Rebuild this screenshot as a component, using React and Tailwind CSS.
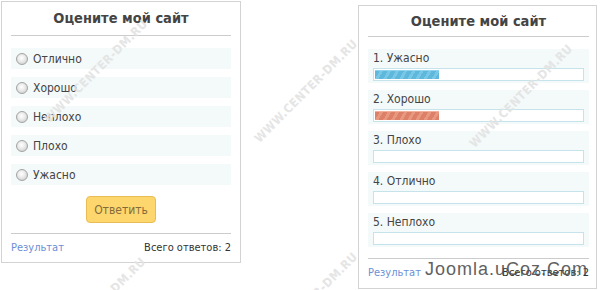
const F = "font-['DejaVu_Sans_Condensed','DejaVu_Sans',sans-serif]";

function Watermark({ className }) {
  return (
    <div
      className={
        "pointer-events-none absolute -translate-x-1/2 -translate-y-1/2 -rotate-45 whitespace-nowrap font-['DejaVu_Sans_Condensed','DejaVu_Sans',sans-serif] text-[12px] font-bold leading-none tracking-[0.5px] text-[#e3e3e3] opacity-90 " +
        className
      }
    >
      WWW.CENTER-DM.RU
    </div>
  );
}

function Radio() {
  return (
    <span className="h-[12px] w-[12px] shrink-0 rounded-full border border-[#a3a3a3] bg-[radial-gradient(circle_at_45%_40%,#ffffff_0%,#ececec_40%,#c4c4c4_100%)]" />
  );
}

function VoteForm() {
  const options = ["Отлично", "Хорошо", "Неплохо", "Плохо", "Ужасно"];
  return (
    <div className={"ml-[1px] mt-[1px] flex h-[262px] w-[240px] shrink-0 flex-col border border-[#d3d3d3] bg-white px-[9px] " + F}>
      <div className="flex h-[34px] shrink-0 items-center justify-center border-b border-[#cccccc] text-[14.5px] font-bold text-[#444444]">
        Оцените мой сайт
      </div>
      <div className="mt-[12px] flex flex-col gap-[8px]">
        {options.map((o) => (
          <div key={o} className="flex h-[21px] items-center gap-[5px] bg-[#f4fafa] pl-[5px] text-[12px] text-[#444444]">
            <Radio />
            <span>{o}</span>
          </div>
        ))}
      </div>
      <div className="mt-[11px] flex justify-center">
        <button className="flex h-[27px] w-[70px] items-center justify-center rounded-[4px] border border-[#e9bd55] bg-[#fed66e] text-[12px] text-[#846c3a]">
          Ответить
        </button>
      </div>
      <div className="mt-[10px] flex justify-between border-t border-[#cccccc] pt-[6px] text-[11px] leading-[16px]">
        <span className="text-[#6b8fd6]">Результат</span>
        <span className="text-[#333333]">Всего ответов: 2</span>
      </div>
    </div>
  );
}

function Results() {
  const rows = [
    { label: "1. Ужасно", fill: "blue" },
    { label: "2. Хорошо", fill: "red" },
    { label: "3. Плохо" },
    { label: "4. Отлично" },
    { label: "5. Неплохо" },
  ];
  return (
    <div className={"ml-[117px] mt-[5px] flex h-[284px] w-[239px] shrink-0 flex-col border border-[#d3d3d3] bg-white pl-[9px] pr-[7px] " + F}>
      <div className="flex h-[31px] shrink-0 items-center justify-center border-b border-[#cccccc] pt-[2px] text-[14.5px] font-bold text-[#444444]">
        Оцените мой сайт
      </div>
      <div className="mt-[12px] flex flex-col gap-[7px]">
        {rows.map((r) => (
          <div key={r.label} className="flex h-[34px] flex-col bg-[#f4fafa] px-[5px] pt-[2px]">
            <div className="text-[12px] leading-[14px] text-[#444444]">{r.label}</div>
            <div className="mt-[3px] flex h-[13px] items-center border border-[#c6e3eb] bg-white p-[1px]">
              {r.fill === "blue" && (
                <div className="h-full w-[64px] border-t border-[#8fd4ee] bg-[repeating-linear-gradient(120deg,#5db8dc_0px,#5db8dc_4px,#78c7e6_4px,#78c7e6_7px)]" />
              )}
              {r.fill === "red" && (
                <div className="h-full w-[64px] border-t border-[#f0b09c] bg-[repeating-linear-gradient(120deg,#dc8168_0px,#dc8168_4px,#e89880_4px,#e89880_7px)]" />
              )}
            </div>
          </div>
        ))}
      </div>
      <div className="mt-[11px] flex justify-between border-t border-[#cccccc] pt-[6px] text-[11px] leading-[16px]">
        <span className="text-[#6b8fd6]">Результат</span>
        <span className="text-[#333333]">Всего ответов: 2</span>
      </div>
    </div>
  );
}

export default function App() {
  return (
    <div className="relative flex h-[290px] w-[600px] items-start overflow-hidden bg-white">
      <VoteForm />
      <Results />
      <Watermark className="left-[96px] top-[71px]" />
      <Watermark className="left-[306px] top-[91px]" />
      <Watermark className="left-[521px] top-[96px]" />
      <Watermark className="left-[94px] top-[309px]" />
      <Watermark className="left-[306px] top-[304px]" />
      <div className="pointer-events-none absolute left-[425px] top-[259px] whitespace-nowrap font-['Liberation_Sans',sans-serif] text-[18px] leading-[20px] tracking-[1px] text-[#505050] opacity-90">
        Joomla.uCoz.Com
      </div>
    </div>
  );
}
